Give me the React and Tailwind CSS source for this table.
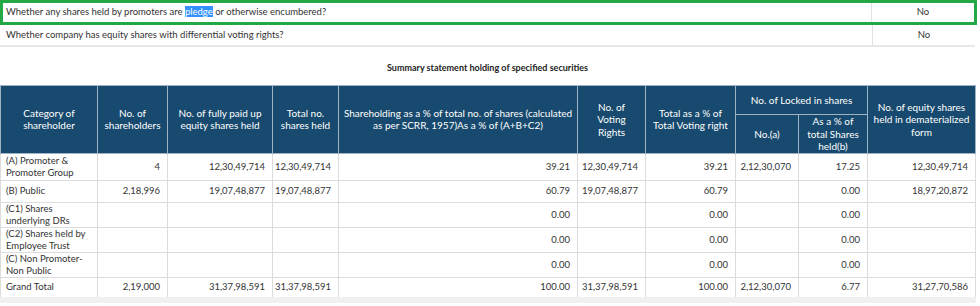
const rows = [
  { label: ['(A) Promoter &', 'Promoter Group'], h: 'h-[27px]', v: ['4', '12,30,49,714', '12,30,49,714', '39.21', '12,30,49,714', '39.21', '2,12,30,070', '17.25', '12,30,49,714'] },
  { label: ['(B) Public'], h: 'h-[22px]', v: ['2,18,996', '19,07,48,877', '19,07,48,877', '60.79', '19,07,48,877', '60.79', '', '0.00', '18,97,20,872'] },
  { label: ['(C1) Shares', 'underlying DRs'], h: 'h-[25px]', v: ['', '', '', '0.00', '', '0.00', '', '0.00', ''] },
  { label: ['(C2) Shares held by', 'Employee Trust'], h: 'h-[25px]', v: ['', '', '', '0.00', '', '0.00', '', '0.00', ''] },
  { label: ['(C) Non Promoter-', 'Non Public'], h: 'h-[25px]', v: ['', '', '', '0.00', '', '0.00', '', '0.00', ''] },
  { label: ['Grand Total'], h: 'h-[23px]', v: ['2,19,000', '31,37,98,591', '31,37,98,591', '100.00', '31,37,98,591', '100.00', '2,12,30,070', '6.77', '31,27,70,586'] },
]

const widths = ['w-[97px]', 'w-[70px]', 'w-[105px]', 'w-[66px]', 'w-[239px]', 'w-[68px]', 'w-[90px]', 'w-[63px]', 'w-[69px]', 'w-[108px]']

export default function App() {
  const th = 'border border-[#9fb3c4] font-normal text-white leading-[12.5px] text-center p-0 whitespace-nowrap text-[10px]'
  const td = 'border border-[#dcdcdc] text-right pr-[7px] leading-[12px] p-0 whitespace-nowrap'

  return (
    <div className="w-[980px] h-[306px] bg-white text-[#333] text-[9.5px] font-['Lato','Liberation_Sans',sans-serif] overflow-hidden">
      {/* disclosure questions */}
      <div className="w-[977px] border-[3px] border-[#22a845] flex h-[25px] items-center">
        <div className="flex-1 pl-[3px]">
          Whether any shares held by promoters are <span className="bg-[#3390ff] text-white">pledge</span> or otherwise encumbered?
        </div>
        <div className="w-[103px] h-full border-l border-[#e2e2e2] flex items-center justify-center">No</div>
      </div>
      <div className="w-[975px] flex h-[22px] items-center border-b-2 border-[#e8e8e8]">
        <div className="flex-1 pl-[6px]">Whether company has equity shares with differential voting rights?</div>
        <div className="w-[103px] h-full border-l border-[#e2e2e2] flex items-center justify-center">No</div>
      </div>

      <div className="w-[975px] text-center font-bold text-[9px] text-[#222] mt-[14px] mb-[10px] leading-[14px]">
        Summary statement holding of specified securities
      </div>

      <table className="border-collapse table-fixed w-[975px] border-b-[6px] border-b-[#f0f0f0]">
        <colgroup>
          {widths.map((w, i) => (
            <col key={i} className={w} />
          ))}
        </colgroup>
        <thead className="bg-[#174a6e]">
          <tr className="h-[29px]">
            <th rowSpan={2} className={th}>Category of<br />shareholder</th>
            <th rowSpan={2} className={th}>No. of<br />shareholders</th>
            <th rowSpan={2} className={th}>No. of fully paid up<br />equity shares held</th>
            <th rowSpan={2} className={th}>Total no.<br />shares held</th>
            <th rowSpan={2} className={th}>Shareholding as a % of total no. of shares (calculated<br />as per SCRR, 1957)As a % of (A+B+C2)</th>
            <th rowSpan={2} className={th}>No. of<br />Voting<br />Rights</th>
            <th rowSpan={2} className={th}>Total as a % of<br />Total Voting right</th>
            <th colSpan={2} className={th}>No. of Locked in shares</th>
            <th rowSpan={2} className={th}>No. of equity shares<br />held in dematerialized<br />form</th>
          </tr>
          <tr className="h-[37px]">
            <th className={th}>No.(a)</th>
            <th className={th}>As a % of<br />total Shares<br />held(b)</th>
          </tr>
        </thead>
        <tbody>
          {rows.map((r, i) => (
            <tr key={i} className={r.h}>
              <td className="border border-[#dcdcdc] pl-[5px] leading-[12px] whitespace-nowrap">
                {r.label.map((l, j) => (
                  <div key={j}>{l}</div>
                ))}
              </td>
              {r.v.map((v, j) => (
                <td key={j} className={td}>{v}</td>
              ))}
            </tr>
          ))}
        </tbody>
      </table>
    </div>
  )
}
